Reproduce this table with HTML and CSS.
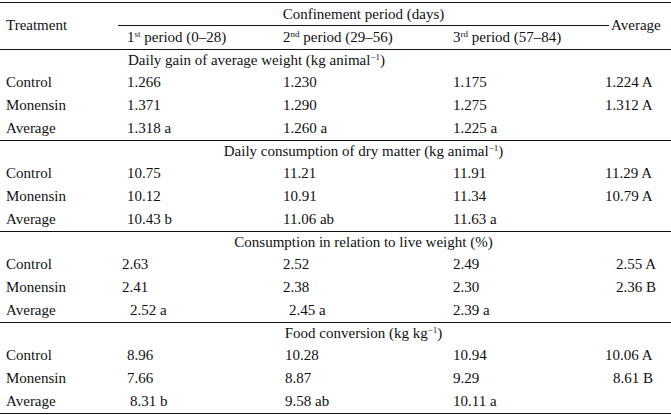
FILE: index.html
```html
<!DOCTYPE html>
<html>
<head>
<meta charset="utf-8">
<link rel="stylesheet" href="styles.css">
</head>
<body>
<table class="tbl">
  <colgroup>
    <col class="c0"><col class="c1"><col class="c2"><col class="c3"><col class="c4">
  </colgroup>
  <thead>
    <tr class="hr">
      <th rowspan="2" class="treat">Treatment</th>
      <th colspan="3" class="conf"><div class="conf-in">Confinement period (days)</div></th>
      <th rowspan="2" class="avgh">Average</th>
    </tr>
    <tr class="hr hr2">
      <th class="per">1<sup>st</sup> period (0–28)</th>
      <th class="per">2<sup>nd</sup> period (29–56)</th>
      <th class="per">3<sup>rd</sup> period (57–84)</th>
    </tr>
  </thead>
  <tbody class="sec">
    <tr class="title"><td></td><td colspan="4" class="ttl-left">Daily gain of average weight (kg animal<sup>−1</sup>)</td></tr>
    <tr><td class="lab">Control</td><td>1.266</td><td>1.230</td><td>1.175</td><td class="av">1.224 A</td></tr>
    <tr><td class="lab">Monensin</td><td>1.371</td><td>1.290</td><td>1.275</td><td class="av">1.312 A</td></tr>
    <tr class="last"><td class="lab">Average</td><td>1.318 a</td><td>1.260 a</td><td>1.225 a</td><td class="av"></td></tr>
  </tbody>
  <tbody class="sec">
    <tr class="title"><td></td><td colspan="4" class="ttl">Daily consumption of dry matter (kg animal<sup>−1</sup>)</td></tr>
    <tr><td class="lab">Control</td><td>10.75</td><td>11.21</td><td>11.91</td><td class="av">11.29 A</td></tr>
    <tr><td class="lab">Monensin</td><td>10.12</td><td>10.91</td><td>11.34</td><td class="av">10.79 A</td></tr>
    <tr class="last"><td class="lab">Average</td><td>10.43 b</td><td>11.06 ab</td><td>11.63 a</td><td class="av"></td></tr>
  </tbody>
  <tbody class="sec">
    <tr class="title"><td></td><td colspan="4" class="ttl">Consumption in relation to live weight (%)</td></tr>
    <tr><td class="lab">Control</td><td class="in-l">2.63</td><td>2.52</td><td>2.49</td><td class="av av-r">2.55 A</td></tr>
    <tr><td class="lab">Monensin</td><td class="in-l">2.41</td><td>2.38</td><td>2.30</td><td class="av av-r">2.36 B</td></tr>
    <tr class="last"><td class="lab">Average</td><td class="in-r">2.52 a</td><td class="in-rr">2.45 a</td><td>2.39 a</td><td class="av"></td></tr>
  </tbody>
  <tbody class="sec">
    <tr class="title"><td></td><td colspan="4" class="ttl">Food conversion (kg kg<sup>−1</sup>)</td></tr>
    <tr><td class="lab">Control</td><td>8.96</td><td class="in-s">10.28</td><td>10.94</td><td class="av">10.06 A</td></tr>
    <tr><td class="lab">Monensin</td><td>7.66</td><td class="in-s">8.87</td><td>9.29</td><td class="av av-m">8.61 B</td></tr>
    <tr class="last"><td class="lab">Average</td><td class="in-r">8.31 b</td><td class="in-s">9.58 ab</td><td>10.11 a</td><td class="av"></td></tr>
  </tbody>
</table>
</body>
</html>
```

FILE: styles.css
```css
html, body {
  margin: 0;
  padding: 0;
  background: #ffffff;
}
body {
  padding-top: 2px;
  font-family: "Liberation Serif", "Times New Roman", serif;
  font-size: 15px;
  color: #111111;
}
.tbl {
  border-collapse: collapse;
  width: 671px;
  table-layout: fixed;
  border-top: 1px solid #111;
  border-bottom: 1px solid #111;
}
.c0 { width: 118px; }
.c1 { width: 156px; }
.c2 { width: 170px; }
.c3 { width: 161px; }
.c4 { width: 66px; }

th, td {
  padding: 0 0 0 9px;
  text-align: left;
  font-weight: normal;
  white-space: nowrap;
  vertical-align: middle;
  line-height: 17px;
}
.hr { height: 23px; }
.hr2 th { border-bottom: 1px solid #111; }
.treat { padding-left: 6px; border-bottom: 1px solid #111; }
.avgh { text-align: left; padding-left: 6px; border-bottom: 1px solid #111; }
.conf { padding: 0; text-align: center; }
.conf-in {
  height: 22px;
  line-height: 22px;
  border-bottom: 1px solid #111;
  margin-right: -4px;
  text-align: center;
}
.sec tr { height: 23px; }
.sec tr.title { height: 22px; }
.sec tr.last td { border-bottom: 1px solid #111; }
.lab { padding-left: 6px; }
.av { padding-left: 0; }
.av-r { padding-left: 11px; }
.av-m { padding-left: 8px; }
.ttl { text-align: center; padding: 0 62px 0 0; }
.ttl-left { padding-left: 10px; }
.in-l { padding-left: 4px; }
.in-r { padding-left: 12px; }
.in-rr { padding-left: 15px; }
.in-s { padding-left: 11px; }
sup {
  font-size: 9px;
  line-height: 0;
  vertical-align: 5px;
}
```
